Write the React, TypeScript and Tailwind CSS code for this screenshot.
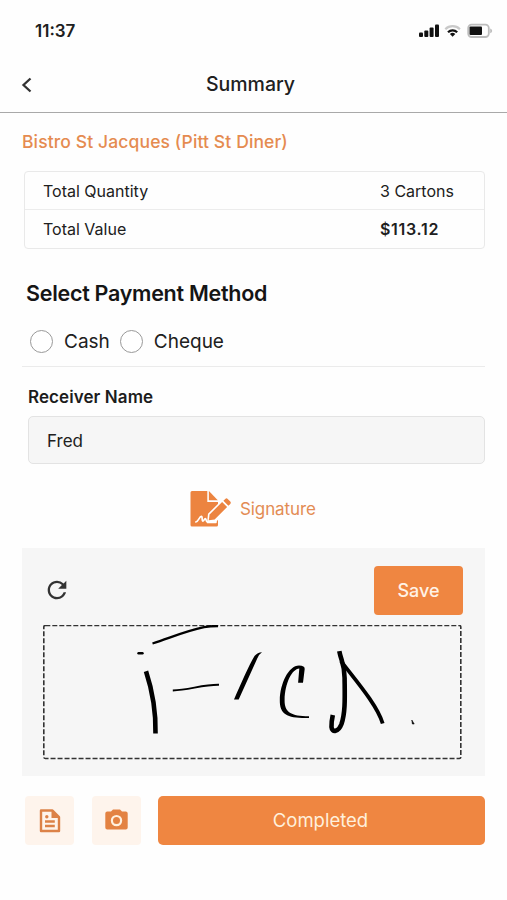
import type { ReactNode } from "react";
import { MdRefresh } from "react-icons/md";

const totals = [
  { label: "Total Quantity", value: "3 Cartons", valueClass: "" },
  { label: "Total Value", value: "$113.12", valueClass: "font-semibold tracking-[0.7px]" },
];

const methods = [
  { id: "cash", label: "Cash" },
  { id: "cheque", label: "Cheque" },
];

function StatusBar() {
  return (
    <div className="flex h-[62px] items-center justify-between pl-[35px] pr-[14px]">
      <span className="text-[17px] font-semibold leading-none">11:37</span>
      <svg width="74" height="16" viewBox="0 0 74 16" aria-hidden>
        <g fill="#111">
          <rect x="0" y="9.600" width="4" height="4.400" rx="1" />
          <rect x="5.300" y="7.600" width="4" height="6.400" rx="1" />
          <rect x="10.600" y="4.600" width="4" height="9.400" rx="1" />
          <rect x="16" y="1.600" width="4" height="12.400" rx="1" />
        </g>
        <g fill="none" strokeWidth="2.200">
          <path d="M26.300 6.200a10.400 10.400 0 0 1 14.600 0" stroke="#c9c9c9" />
          <path d="M29 9.200a6.600 6.600 0 0 1 9.200 0" stroke="#111" />
        </g>
        <path d="M33.600 13.800l-2.700-2.700a3.900 3.900 0 0 1 5.400 0z" fill="#111" />
        <rect x="49.200" y="1.600" width="20.600" height="12.400" rx="3.400" fill="none" stroke="#bdbdbd" strokeWidth="1.800" />
        <rect x="50.500" y="3.600" width="12.500" height="8.400" rx="1" fill="#111" />
        <path d="M71.200 5.400c2.600.9 2.600 3.900 0 4.800z" fill="#bdbdbd" />
      </svg>
    </div>
  );
}

function SignatureIcon() {
  return (
    <svg width="42" height="38" viewBox="0 0 42 38" aria-hidden>
      <path d="M2 1h15.300v11H28V35a1.500 1.500 0 0 1-1.500 1.500H2a1.500 1.500 0 0 1-1.500-1.500V2.500A1.500 1.500 0 0 1 2 1z" fill="#ec8440" />
      <path d="M18.900 1l8.900 9.300h-8.900z" fill="#ec8440" />
      <path d="M18 23.800L33.500 8.500l7 7L26.300 31.800v1.500H17z" fill="#fff" />
      <path d="M19.600 24.500L32.100 12l5 5-12.500 12.500-5.800.8z" fill="#ec8440" />
      <path d="M33.400 10.800l1.900-1.900q1.200-1.200 2.400 0l2.600 2.600q1.200 1.200 0 2.400l-1.900 1.900z" fill="#ec8440" />
      <path
        d="M5.800 32c2.700-.4 3.500-5.500 5.500-5.600 1.600 0 .2 4.600 1.500 4.800 1.300 0 1.300-2.500 2.500-2.500 1 0 .6 2.700 2 3.200h8.700"
        fill="none"
        stroke="#fff"
        strokeWidth="1.700"
        strokeLinecap="round"
      />
    </svg>
  );
}

function NoteIcon() {
  return (
    <svg width="22" height="24" viewBox="0 0 22 24" aria-hidden>
      <path d="M2 1.500h11.500l6.500 6.500V22H2z" fill="none" stroke="#dc8248" strokeWidth="2.400" strokeLinejoin="round" />
      <path d="M12.500 1v8h8z" fill="#dc8248" />
      <path d="M6 12.500h9.800M6 17h9.800" stroke="#dc8248" strokeWidth="2.300" />
      <circle cx="7.800" cy="7.800" r="1.700" fill="#dc8248" />
    </svg>
  );
}

function CameraIcon() {
  return (
    <svg width="23" height="21" viewBox="0 0 23 21" className="mb-[2px]" aria-hidden>
      <path d="M2.300 2.600H6L8 .5h7l2 2.100h3.700a2 2 0 0 1 2 2v14a2 2 0 0 1-2 2H2.300a2 2 0 0 1-2-2v-14a2 2 0 0 1 2-2z" fill="#e38242" />
      <circle cx="11.500" cy="11.600" r="4.600" fill="none" stroke="#fff0de" strokeWidth="2.200" />
    </svg>
  );
}

// Pen strokes, drawn across the whole pad including its dashed border.
function Ink() {
  return (
    <svg
      className="absolute inset-0"
      width="419"
      height="135"
      viewBox="43 625 419 135"
      fill="none"
      stroke="#000"
      aria-hidden
    >
      <rect x="43.800" y="625.500" width="417" height="133" rx="1.500" stroke="#333" strokeWidth="1.600" strokeDasharray="5 2" />
      <path d="M138.500 653.200h4" strokeWidth="2.400" strokeLinecap="round" />
      <path d="M152.500 643.500C170 638 184 631.500 204 627.200C210 626 214 626 218 626" strokeWidth="2.300" />
      <path d="M146 671.200C152.500 691 156 711 155.500 733.500" strokeWidth="4.600" />
      <path d="M172.800 690.500C189 690 203 684.500 219 684.800" strokeWidth="2" />
      <path d="M234 699.500C242 681.500 248.500 666 254.500 656Q257.500 652.500 262 652.300Q258.500 654.500 257 659L238.700 699.500z" fill="#000" stroke="none" />
      <path
        d="M303 682.700h-4.900l1.200-14.200C292 669 285 683 284.600 700C284.400 712.500 291 716 309 716.300V718C288 718.500 279.500 715 279.800 700C280 684 288.500 665.500 299 665.500Q305 665.500 304.700 669z"
        fill="#000"
        stroke="none"
      />
      <path d="M339.300 651.200C341 661 344.500 663 344.600 678C344.800 697 345.500 712 341.500 724C338.500 732 332 733 331.500 727Q331.300 722 332.800 715" strokeWidth="4.600" />
      <path d="M341 661C352 676 377 704 382.700 723.500" strokeWidth="3.800" />
      <path d="M411.800 720l2.400 4h-1.800z" fill="#000" strokeWidth=".6" />
    </svg>
  );
}

function IconButton({ label, children }: { label: string; children: ReactNode }) {
  return (
    <button
      aria-label={label}
      className="flex h-[49px] w-[49px] shrink-0 items-center justify-center rounded bg-[#fef4ec]"
    >
      {children}
    </button>
  );
}

export default function App() {
  return (
    <div className="h-[900px] w-[507px] overflow-hidden bg-[#fefefe] font-['Inter',sans-serif] text-[#202020]">
      <StatusBar />

      <header className="grid h-[51px] grid-cols-[60px_1fr_66px] items-center border-b border-[#a9a9a9] pb-[5px]">
        <button aria-label="Back" className="pl-[21px]">
          <svg width="12" height="16" viewBox="0 0 12 16" fill="none" stroke="#333" strokeWidth="2.300" aria-hidden>
            <path d="M9.500 1.500L2.500 8l7 6.500" />
          </svg>
        </button>
        <h1 className="text-center text-[19.500px] font-medium leading-none">Summary</h1>
      </header>

      <main className="px-[22px]">
        <h2 className="pt-[17px] text-[17.500px] font-medium leading-6 tracking-[0.12px] text-[#e58b50]">
          Bistro St Jacques (Pitt St Diner)
        </h2>

        <dl className="ml-[2px] mt-[17px] h-[78px] divide-y divide-[#ececec] rounded border border-[#e9e9e9]">
          {totals.map(({ label, value, valueClass }) => (
            <div key={label} className="flex h-[38px] items-center justify-between pl-[18px] text-[16px]">
              <dt>{label}</dt>
              <dd className={`w-[104px] ${valueClass}`}>{value}</dd>
            </div>
          ))}
        </dl>

        <h3 className="ml-[4px] mt-[28px] text-[21.500px] font-semibold leading-8 tracking-[-0.28px] text-[#151515]">
          Select Payment Method
        </h3>
        <div className="flex h-[58px] items-center gap-[10px] border-b border-[#ebebeb] pl-[8px] pt-[8px]">
          {methods.map(({ id, label }) => (
            <label key={id} className="flex items-center gap-[11px] text-[19px] leading-6">
              <input
                type="radio"
                name="payment"
                value={id}
                className="h-[23px] w-[23px] appearance-none rounded-full border-[1.500px] border-[#999] bg-white checked:border-[7px] checked:border-[#ef8641]"
              />
              {label}
            </label>
          ))}
        </div>

        <label className="ml-[6px] mt-[18px] block">
          <span className="block text-[17px] font-semibold leading-6 tracking-[0.08px] text-[#1c1c1c]">Receiver Name</span>
          <input
            defaultValue="Fred"
            className="mt-[7px] block h-[48px] w-full rounded-[5px] border border-[#e3e3e3] bg-[#f6f6f6] px-[18px] pt-[1px] text-[17px] outline-none"
          />
        </label>

        <div className="flex h-[84px] items-center gap-[8px] pl-[168px] pt-[6px]">
          <SignatureIcon />
          <span className="pt-[2px] text-[17px] tracking-[-0.1px] text-[#e38c54]">Signature</span>
        </div>

        <section className="h-[228px] bg-[#f6f6f6] px-[21px] pt-[18px]">
          <div className="flex items-center justify-between pr-[1px]">
            <button aria-label="Clear signature" className="pb-[1px] text-[#333]">
              <MdRefresh size={28} />
            </button>
            <button className="h-[49px] w-[89px] rounded-[4px] bg-[#ef8641] text-[18px] font-medium text-[#fff3e6]">
              Save
            </button>
          </div>
          <div className="relative mt-[10px] h-[135px] w-[419px]">
            <Ink />
          </div>
        </section>

        <footer className="ml-[3px] mt-[20px] flex items-center">
          <IconButton label="Add note">
            <NoteIcon />
          </IconButton>
          <div className="ml-[18px]">
            <IconButton label="Take photo">
              <CameraIcon />
            </IconButton>
          </div>
          <button className="ml-[17px] h-[49px] flex-1 rounded-[5px] bg-[#ef8641] pr-[2px] pt-[1px] text-[18.500px] text-[#fff0dc]">
            Completed
          </button>
        </footer>
      </main>
    </div>
  );
}
